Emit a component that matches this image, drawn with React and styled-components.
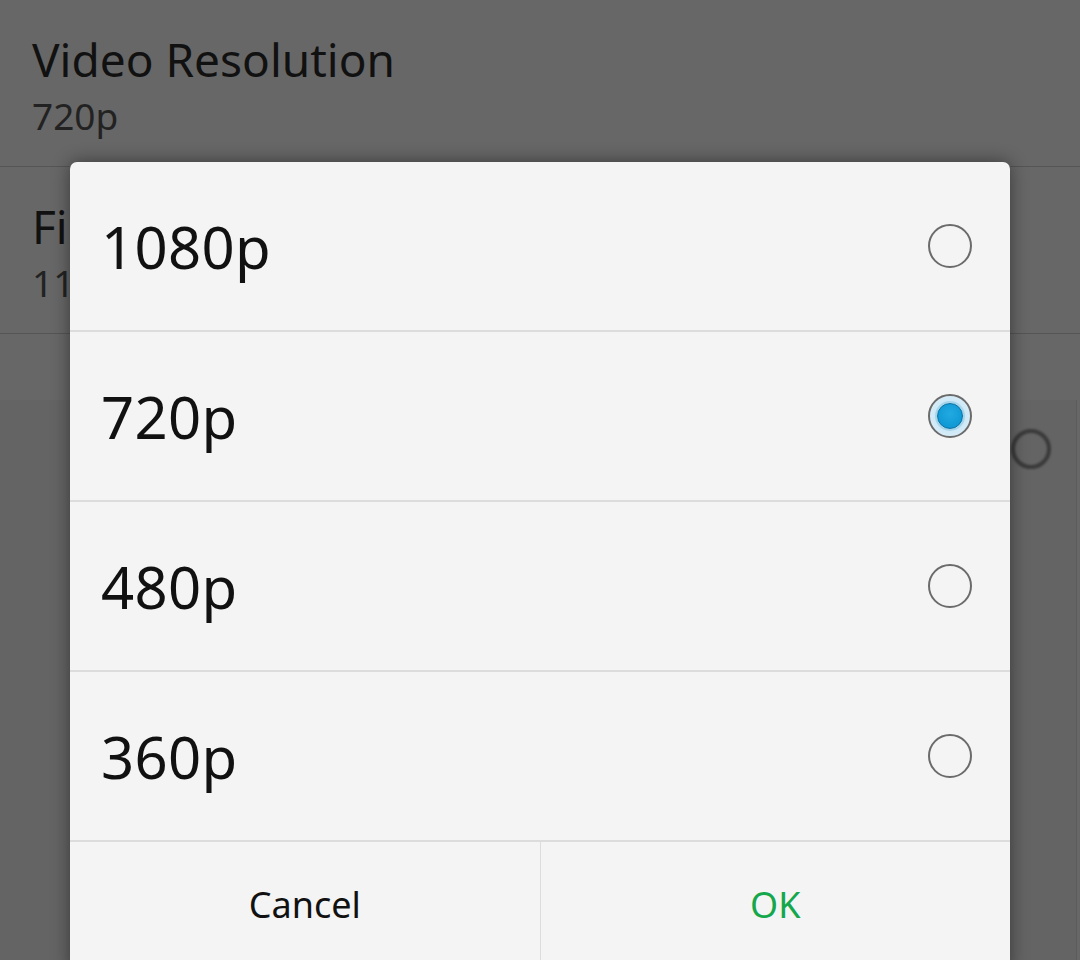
import React from 'react';
import styled, { createGlobalStyle } from 'styled-components';

const GlobalStyle = createGlobalStyle`
  html, body {
    margin: 0;
    padding: 0;
    background: #666666;
  }

  body {
    font-family: 'Noto Sans', 'Open Sans', sans-serif;
  }
`;

const Screen = styled.div`
  position: relative;
  width: 1080px;
  height: 960px;
  overflow: hidden;
  background: #676767;
`;

const SettingsList = styled.div`
  display: flex;
  flex-direction: column;
`;

const SettingRow = styled.div`
  display: flex;
  flex-direction: column;
  justify-content: center;
  gap: 4px;
  height: 167px;
  padding: 2px 32px 0;
  box-sizing: border-box;
  border-bottom: 1px solid #555555;
`;

const SettingTitle = styled.div`
  font-size: 46px;
  line-height: 60px;
  color: #111111;
`;

const SettingValue = styled.div`
  font-size: 37px;
  line-height: 46px;
  color: #222222;
`;

// faint leftover of a panel behind the dim layer
const GhostPanel = styled.div`
  margin-top: 66px;
  margin-right: 3px;
  height: 560px;
  background: #646464;
  border-right: 1px solid #5c5c5c;
  display: flex;
  justify-content: flex-end;
  padding: 29px 25px 0 0;
  box-sizing: border-box;
`;

const GhostRing = styled.div`
  width: 40px;
  height: 40px;
  border-radius: 50%;
  border: 4px solid #333333;
  box-sizing: border-box;
  filter: blur(1px);
  opacity: 0.85;
`;

const Dialog = styled.div`
  position: absolute;
  left: 70px;
  top: 162px;
  width: 940px;
  background: #f4f4f4;
  border-radius: 7px 7px 0 0;
  box-shadow: 0 0 18px rgba(0, 0, 0, 0.45);
  display: flex;
  flex-direction: column;
`;

const Option = styled.div`
  display: flex;
  align-items: center;
  justify-content: space-between;
  height: 168px;
  padding: 0 38px 0 31px;
  border-bottom: 2px solid #dcdcdc;
`;

const OptionLabel = styled.span`
  font-size: 58px;
  color: #111111;
  letter-spacing: 0.3px;
`;

const Radio = styled.span`
  position: relative;
  width: 44px;
  height: 44px;
  border-radius: 50%;
  border: 2px solid #6b6b6b;
  box-sizing: border-box;
  display: flex;
  align-items: center;
  justify-content: center;
  background: ${(p) =>
    p.$checked ? 'radial-gradient(circle, #b4dcf1 0%, #d6ecf8 70%, #eef7fc 100%)' : 'transparent'};
`;

const RadioDot = styled.span`
  width: 26px;
  height: 26px;
  border-radius: 50%;
  box-sizing: border-box;
  border: 1px solid #0b6f9e;
  background: radial-gradient(circle at 50% 40%, #22a9e2 0%, #0f9ad5 70%, #0a86bd 100%);
  box-shadow: 0 0 0 2px rgba(120, 190, 225, 0.45);
`;

const Actions = styled.div`
  display: flex;
  height: 130px;
`;

const ActionButton = styled.button`
  flex: 1;
  border: none;
  background: transparent;
  font-family: 'Noto Sans', 'Open Sans', sans-serif;
  font-size: 36px;
  color: ${(p) => (p.$primary ? '#15a74b' : '#111111')};
  padding: 0 0 6px;
  display: flex;
  align-items: center;
  justify-content: center;

  & + & {
    border-left: 1px solid #dcdcdc;
  }
`;

const options = ['1080p', '720p', '480p', '360p'];

export default function App() {
  const selected = '720p';

  return (
    <Screen>
      <GlobalStyle />
      <SettingsList>
        <SettingRow>
          <SettingTitle>Video Resolution</SettingTitle>
          <SettingValue>720p</SettingValue>
        </SettingRow>
        <SettingRow>
          <SettingTitle>File Size Limit</SettingTitle>
          <SettingValue>110 MB</SettingValue>
        </SettingRow>
        <GhostPanel>
          <GhostRing />
        </GhostPanel>
      </SettingsList>

      <Dialog>
        {options.map((opt) => (
          <Option key={opt}>
            <OptionLabel>{opt}</OptionLabel>
            <Radio $checked={opt === selected}>{opt === selected && <RadioDot />}</Radio>
          </Option>
        ))}
        <Actions>
          <ActionButton>Cancel</ActionButton>
          <ActionButton $primary>OK</ActionButton>
        </Actions>
      </Dialog>
    </Screen>
  );
}
